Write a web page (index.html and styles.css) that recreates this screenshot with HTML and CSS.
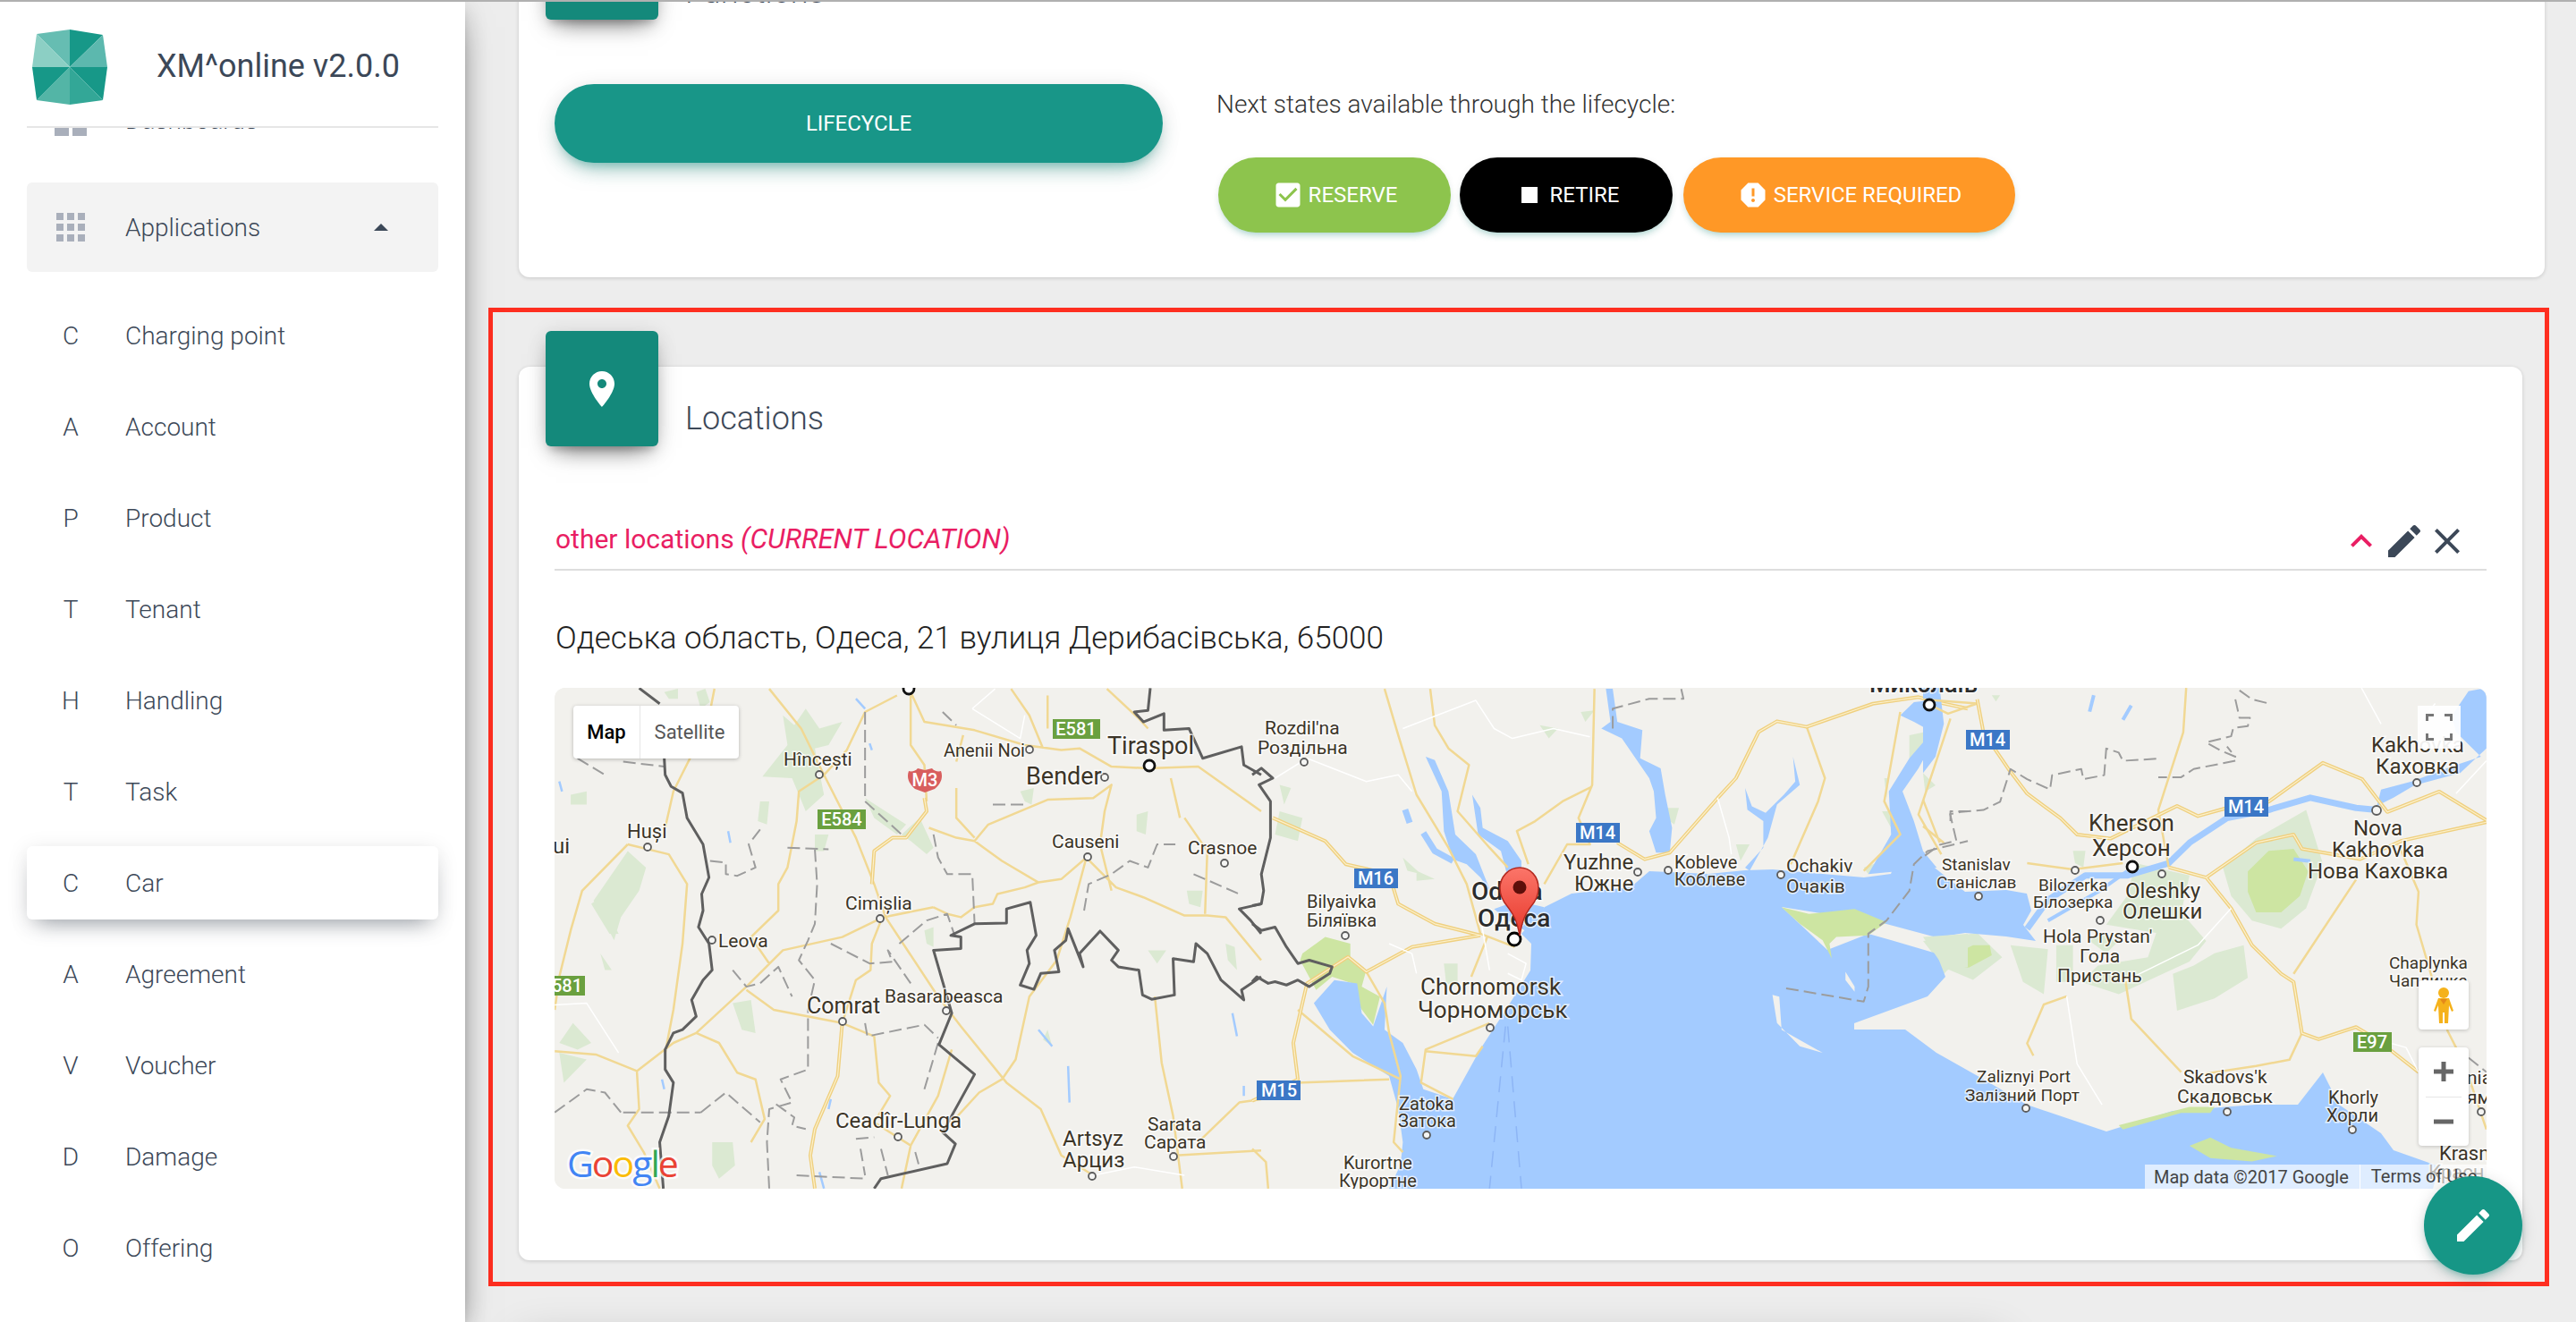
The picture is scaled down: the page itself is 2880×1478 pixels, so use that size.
FILE: index.html
```
<!DOCTYPE html>
<html lang="en">
<head>
<meta charset="utf-8">
<title>XM^online</title>
<link rel="stylesheet" href="styles.css">
</head>
<body>
<div class="topline"></div>
<div class="app">
  <aside class="sidebar">
    <header class="brand">
      <svg class="logo" viewBox="36 33 84 84">
        <path fill="#66bdb2" d="M78 75 41 38 78 33z"/>
        <path fill="#179888" d="M78 75V33l37 6z"/>
        <path fill="#5cb8ae" d="M78 75l37-36 5 36z"/>
        <path fill="#179888" d="M78 75h42l-5 37z"/>
        <path fill="#33a797" d="M78 75l37 37-37 5z"/>
        <path fill="#53b5a6" d="M78 75v42l-37-5z"/>
        <path fill="#179888" d="M78 75 41 112l-5-37z"/>
        <path fill="#8ccfc4" d="M78 75H36l5-37z"/>
      </svg>
      <span class="brand-title">XM^online v2.0.0</span>
    </header>
    <nav class="nav">
      <div class="nav-list">
        <a class="nav-item nav-dash"><span class="nav-mark"><span class="squares-2"><i></i><i></i><i></i><i></i></span></span><span>Dashboards</span></a>
        <a class="nav-item nav-apps"><span class="nav-mark"><span class="squares-3"><i></i><i></i><i></i><i></i><i></i><i></i><i></i><i></i><i></i></span></span><span>Applications</span><b class="caret"></b></a>
        <a class="nav-item"><span class="nav-mark">C</span><span>Charging point</span></a>
        <a class="nav-item"><span class="nav-mark">A</span><span>Account</span></a>
        <a class="nav-item"><span class="nav-mark">P</span><span>Product</span></a>
        <a class="nav-item"><span class="nav-mark">T</span><span>Tenant</span></a>
        <a class="nav-item"><span class="nav-mark">H</span><span>Handling</span></a>
        <a class="nav-item"><span class="nav-mark">T</span><span>Task</span></a>
        <a class="nav-item nav-active"><span class="nav-mark">C</span><span>Car</span></a>
        <a class="nav-item"><span class="nav-mark">A</span><span>Agreement</span></a>
        <a class="nav-item"><span class="nav-mark">V</span><span>Voucher</span></a>
        <a class="nav-item"><span class="nav-mark">D</span><span>Damage</span></a>
        <a class="nav-item"><span class="nav-mark">O</span><span>Offering</span></a>
      </div>
    </nav>
  </aside>
  <main class="main">
    <section class="card card-functions">
      <div class="card-head">
        <div class="card-icon"></div>
        <h2 class="card-title">Functions</h2>
      </div>
      <div class="life-row">
        <button class="btn-life">LIFECYCLE</button>
        <div class="states">
          <p class="states-text">Next states available through the lifecycle:</p>
          <div class="states-row">
            <button class="btn-state st-reserve"><svg viewBox="0 0 24 24"><path d="M19 3H5c-1.11 0-2 .9-2 2v14c0 1.1.89 2 2 2h14c1.11 0 2-.9 2-2V5c0-1.1-.89-2-2-2zm-9 14l-5-5 1.41-1.41L10 14.17l7.59-7.59L19 8l-9 9z"/></svg>RESERVE</button>
            <button class="btn-state st-retire"><svg viewBox="0 0 24 24"><path d="M6 6h12v12H6z"/></svg>RETIRE</button>
            <button class="btn-state st-service"><svg viewBox="0 0 24 24"><path d="M15.73 3H8.27L3 8.27v7.46L8.27 21h7.46L21 15.73V8.27L15.73 3zM12 17.3c-.72 0-1.3-.58-1.3-1.3 0-.72.58-1.3 1.3-1.3.72 0 1.3.58 1.3 1.3 0 .72-.58 1.3-1.3 1.3zm1-4.3h-2V7h2v6z"/></svg>SERVICE REQUIRED</button>
          </div>
        </div>
      </div>
    </section>

    <div class="frame">
      <section class="card card-locations">
        <div class="card-head">
          <div class="card-icon"><svg viewBox="0 0 24 24"><path d="M12 2C8.13 2 5 5.13 5 9c0 5.25 7 13 7 13s7-7.75 7-13c0-3.87-3.13-7-7-7zm0 9.5c-1.38 0-2.5-1.12-2.5-2.5s1.12-2.5 2.5-2.5 2.5 1.12 2.5 2.5-1.12 2.5-2.5 2.5z"/></svg></div>
          <h2 class="card-title">Locations</h2>
        </div>
        <div class="loc-head">
          <span class="loc-name">other locations <em>(CURRENT LOCATION)</em></span>
          <span class="loc-tools">
            <svg class="tool tool-pink" viewBox="0 0 24 24"><path d="M12 8l-6 6 1.41 1.41L12 10.83l4.59 4.58L18 14z"/></svg>
            <svg class="tool" viewBox="0 0 24 24"><path d="M3 17.25V21h3.75L17.81 9.94l-3.75-3.75L3 17.25zM20.71 7.04c.39-.39.39-1.02 0-1.41l-2.34-2.34c-.39-.39-1.02-.39-1.41 0l-1.83 1.83 3.75 3.75 1.83-1.83z"/></svg>
            <svg class="tool" viewBox="0 0 24 24"><path d="M19 6.41L17.59 5 12 10.59 6.41 5 5 6.41 10.59 12 5 17.59 6.41 19 12 13.41 17.59 19 19 17.59 13.41 12z"/></svg>
          </span>
        </div>
        <p class="address">Одеська область, Одеса, 21 вулиця Дерибасівська, 65000</p>
        <div class="map">
          <svg class="map-art" viewBox="0 0 2160 560">
            <defs>
              <linearGradient id="pinfill" x1="0" y1="0" x2="0" y2="1">
                <stop offset="0" stop-color="#fb7569"/>
                <stop offset="1" stop-color="#e8392c"/>
              </linearGradient>
            </defs>
            <rect class="land" width="2160" height="560"/>

            <!-- region west -->
            <g transform="translate(-10,-10) scale(.5102,.37)">
              <path class="gl" d="M520 110 545 140 570 90 600 150 650 130 620 200 590 210 610 350 570 400 540 300 475 295 530 200zM780 470 820 420 850 510 835 530 800 490zM700 360 790 440 770 470 720 420zM180 520 220 570 205 640 165 720 150 790 105 670 130 620zM60 1040 100 1100 70 1120 30 1100zM410 980 450 970 460 1070 430 1060zM365 1400 410 1400 415 1470 380 1510 365 1470zM30 1130 90 1150 40 1220zM470 370 490 370 485 440 465 430zM330 40 350 30 360 70 340 90zM260 40 290 30 290 60 270 60zM1040 340 1070 330 1065 380 1050 370zM1295 410 1320 400 1315 470 1295 460zM1405 640 1440 640 1435 690 1410 680zM830 760 850 750 850 810 835 800zM1320 820 1360 820 1340 860zM1490 800 1510 810 1515 880 1495 850zM120 830 145 880 130 880zM55 350 90 340 90 380 55 380zM120 660 160 770 140 770 100 680zM590 470 620 470 610 520 590 520zM1090 1090 1110 1110 1100 1060z"/>
              <path class="water-s" d="M400 460 405 495M710 195 715 215M30 310 36 340M680 60 700 90M1505 1010 1515 1080M1080 1060 1110 1110M1145 1170 1148 1280M1530 1230 1530 1260M255 1210 260 1240M625 1270 620 1300M600 1490 610 1540"/>
              <path class="road" d="M610 290 680 480 720 620 745 720 860 960 910 1050 1010 1220 1085 1300 1130 1440 1200 1500M800 40 830 130 940 155 1050 200 1130 215 1170 210 1240 265 1320 270 1430 265 1568 400M770 50 700 100 660 215 610 290 555 340 550 430 530 570 510 620 510 700 450 780 490 860M180 500 80 640 55 760 30 900 20 1000M180 500 270 530 310 620 300 800 280 1000 262 1130M330 1070 380 1100 420 1190 460 1210 480 1330 450 1400M740 720 650 780 520 820 440 930 330 1070 280 1100 200 1185 110 1135 20 1125M440 940 500 1000 650 1040 720 1080 730 1220 755 1260 720 1340 800 1410 780 1540M735 730 715 800 712 880 680 910 650 1040M850 690 740 720M850 690 880 710 910 720 940 690 980 680 990 650 1050 630 1080 615 1130 605 1185 540 1150 720 1120 850 1060 960 1030 1150 1000 1210 950 1250 890 1340M1185 540 1250 630 1310 660 1400 715 1450 715 1490 720 1568 850M940 490 970 440 1100 365 1200 360 1240 320 1225 400 1215 500M800 50 800 200 830 260 835 370M940 490 960 510 1000 550 1080 615M840 450 900 480 940 490M900 250 915 170M900 330 900 420 940 480M1335 960 1350 1160 1375 1320 1395 1540M1380 1440 1568 1425M1430 1400 1520 1280 1568 1270M1020 30 1060 110 1090 210M1230 30 1300 120 1320 150M1100 50 1100 150M1400 420 1450 520 1445 710M1370 300 1390 420M200 1185 205 1300 180 1350 215 1430 250 1540M370 30 360 100 320 230 280 340 262 450M490 30 560 150 610 290M800 1410 860 1260 890 1120M1215 500 1240 640"/>
              <path class="road road-wide" d="M650 1040 640 1200 590 1360 580 1440 590 1540M830 360 835 400 790 480 760 480 720 520 715 620"/>
              <path class="road-core" d="M650 1040 640 1200 590 1360 580 1440 590 1540M830 360 835 400 790 480 760 480 720 520 715 620"/>
              <path class="minor" d="M20 985 90 980 160 1130M1400 1500 1290 1475 1200 1500M935 90 985 30M935 90 1040 180 1050 110"/>
              <path class="dash" d="M470 455 445 500 460 570 420 595 395 590 395 555 360 550M530 510 620 515M590 515 595 620 590 740 575 790 555 850 590 910 575 1000 575 1180 515 1210 540 1280 490 1300 485 1400 490 1540M625 800 710 860 760 855 750 820 800 920M775 800 835 730 880 710 895 770M700 1040 705 1080 830 1045 860 1085M860 1100 830 1240M170 1310 340 1310M20 1310 90 1240 130 1250 165 1310M340 1310 395 1250 470 1340M505 1285 545 1325 540 1350 570 1360M680 1390 720 1385M690 1420 700 1500M735 1420 750 1500M810 1430 820 1480M550 1500 700 1510M700 100 700 370 780 470M850 470 860 540 880 590 935 590 940 740M1180 700 1190 620 1240 590 1280 550 1320 570 1340 500 1380 500M70 240 130 290M170 250 260 265M870 100 900 140M980 380 1050 380M1420 590 1520 650M410 880 440 930 470 920 510 870 540 960"/>
              <path class="border" d="M205 28 250 75M260 240 262 290 275 325 300 345 310 420 345 500 358 600 342 650 345 700 335 750 358 800 365 880 345 910 320 970 330 1020 300 1060 280 1070 262 1120 262 1180 280 1220 270 1320 250 1400 258 1540M720 1540 735 1510 880 1465 898 1405 870 1370 940 1195 862 1105 890 1010 850 820 910 815 910 780 888 775 940 740 1010 738 1010 695 1062 675 1075 775 1055 820 1060 860 1040 925 1070 938 1085 890 1125 885 1115 820 1140 790 1145 755 1178 870 1170 830 1215 762 1255 820 1240 850 1255 870 1300 880 1308 955 1328 968 1378 955 1375 845 1420 855 1425 800 1450 830 1480 910 1530 970 1525 940 1568 900M1325 28 1320 95 1290 100 1310 130 1355 105 1355 155 1410 150 1440 240 1525 205 1530 260 1568 290M1568 680 1520 695 1545 730 1568 770"/>
            </g>

            <!-- region centre: land features -->
            <g transform="translate(780,-10) scale(.5102,.37)">
              <path class="gl" d="M60 400 110 420 100 490 50 470zM330 540 370 590 340 580zM360 580 400 605 360 610zM630 140 670 150 650 180zM720 100 750 95 730 130zM910 390 935 390 925 440 905 420zM420 860 450 860 450 930 425 920zM1060 500 1090 500 1070 550zM1440 170 1475 160 1470 220 1440 240zM1385 300 1395 300 1390 360zM1380 400 1405 400 1400 450zM1340 570 1380 550 1350 590zM1485 790 1540 790 1530 870 1510 900zM60 320 85 330 70 380z"/>
              <path class="gs" d="M110 830 160 780 215 800 215 840 250 880 240 930 280 960 265 1045 235 990 220 920 175 900 140 940 105 850z"/>
            </g>

            <!-- east green -->
            <g transform="translate(1530,-10) scale(.4655,.4579)">
              <path class="gl" d="M0 640 130 620 190 680 120 735 50 705zM210 650 300 660 290 770 240 740zM320 650 360 650 360 740 320 740zM380 740 470 770 640 690 680 640 620 570 640 480 510 450 490 530 440 600 560 620 540 680 420 700zM600 720 650 700 700 670 770 650 780 730 700 780 610 810zM720 460 800 390 920 320 960 450 920 560 860 610 790 590 740 530zM400 640 430 620 470 640 440 670zM0 230 30 260 5 275zM165 40 185 40 175 55zM360 420 390 420 385 460 365 450z"/>
              <path class="gs" d="M780 470 830 420 890 415 925 470 905 530 860 570 800 570 780 520zM80 670 120 650 160 650 165 675 110 705 75 700z"/>
            </g>

            <!-- water -->
            <path class="water" d="M933 560 956 512 1004 460 1035 404 1066 356 1091 316 1092 286 1081 275 1107 245 1137 230 1203 223 1224 205 1290 208 1331 204 1362 203 1418 208 1464 212 1494 208 1510 168 1530 191 1577 228 1623 226 1646 230 1651 249 1642 265 1656 283 1623 278 1577 274 1545 279 1489 264 1372 245 1423 293 1469 275 1494 282 1545 297 1555 323 1535 345 1494 360 1453 375 1453 382 1510 382 1545 408 1600 439 1646 466 1735 496 1809 473 1902 466 1949 466 1977 430 1995 466 2042 498 2056 517 2107 535 2100 560z"/>
            <g transform="translate(780,-10) scale(.5102,.37)">
              <path class="water" d="M135 980 180 910 230 920 240 1010 265 1050 295 930 290 1060 330 1100 360 1180 375 1240 440 1270 345 1420 320 1540 330 1400 320 1300 300 1200 220 1130 170 1060zM530 695 580 670 640 690 610 770 560 730zM380 235 400 245 430 340 445 470 490 530 510 600 525 650 500 600 470 560 440 545 420 460 415 340zM482 350 500 390 505 450 560 490 590 550 590 600 560 600 545 520 495 470zM775 30 790 30 800 130 855 155 850 240 895 270 905 350 920 450 915 525 885 525 870 460 885 420 880 340 870 300 840 240 810 180 765 150 785 130zM1185 235 1200 320 1150 380 1130 480 1090 580 1080 570 1120 510 1120 430 1085 395 1080 330 1095 385 1125 405 1165 350 1190 310zM1420 110 1450 70 1485 65 1510 110 1500 170 1460 270 1425 340 1450 430 1470 520 1500 570 1350 590 1400 470 1395 340 1440 240 1490 160 1450 130z"/>
              <path class="riv w7" d="M375 465 400 520 440 550M335 395 345 435"/>
              <path class="gs" d="M1160 690 1220 710 1320 695 1390 735 1350 775 1280 780 1265 800 1270 845 1250 790 1200 740z"/>
              <path class="land" d="M1140 955 1155 960 1160 1060 1250 1130 1200 1110 1150 1040zM1300 885 1320 930 1320 945 1300 910z"/>
              <path class="gl" d="M1470 780 1568 770 1568 870 1520 880z"/>
              <path class="road" d="M290 30 320 170 360 350 430 510 470 620 500 770 575 810M390 30 400 140 430 210 475 260 450 400 520 510 560 570M750 30 745 320 715 420 740 500 690 500 640 620M745 325 680 370 620 430 580 460 605 560M1215 145 1255 300 1240 370 1180 560M1420 100 1385 370 1420 470 1340 580M1530 120 1460 410 1510 530M250 885 290 980 300 1070 325 1200 310 1400 330 1430M100 1000 220 1140 325 1210M520 1040 380 1120 370 1220 440 1270M380 1125 490 1140 505 1110M480 900 515 780M100 1220 300 1210M0 1420 30 1460 35 1540"/>
              <path class="road road-wide" d="M800 495 860 545 915 525 1020 360 1060 300 1110 160 1150 128 1215 145 1360 75 1460 55 1500 70 1568 90M45 420 160 490 205 560 300 590 320 680 400 740 500 775M500 775 350 810 250 885 210 840 120 920 90 1100 100 1210 0 1275"/>
              <path class="road-core" d="M800 495 860 545 915 525 1020 360 1060 300 1110 160 1150 128 1215 145 1360 75 1460 55 1500 70 1568 90M45 420 160 490 205 560 300 590 320 680 400 740 500 775M500 775 350 810 250 885 210 840 120 920 90 1100 100 1210 0 1275"/>
              <path class="minor" d="M500 720 520 880M560 830 600 860 590 910 560 890M330 150 490 65 530 150 570 180 660 150 740 175M50 300 120 240 250 310 320 290 350 340M1020 360 1045 480 1050 530M300 800 350 830 360 890"/>
              <path class="dash" d="M790 150 790 90 870 60 945 60 940 30M1170 935 1340 975 1350 930 1350 770 1390 730 1440 640 1450 560 1480 520 1568 490M1530 430 1530 400 1568 400"/>
              <path class="lane" d="M555 1050 520 1540M560 1050 590 1540"/>
              <path class="border" d="M0 290 20 270 45 300 15 320 40 370 40 480 20 590 25 640 20 680 0 685M0 740 20 760 50 750 75 810 100 860 125 850 175 870 170 890 125 930 100 910 75 925 50 915 35 920 10 900 0 915"/>
            </g>

            <!-- east rivers and roads -->
            <g transform="translate(1530,-10) scale(.4655,.4579)">
              <path class="water" d="M1353 22 1310 30 1270 90 1280 130 1340 190 1280 210 1175 250 1100 270 1090 310 1130 290 1180 260 1290 230 1353 170zM0 22 40 22 50 110 30 190 0 230z"/>
              <path class="riv w7" d="M1090 320 1040 315 930 290 830 320 730 340 640 400 590 450 490 480 390 480 300 540 250 610"/>
              <path class="riv w4" d="M890 440 930 445M490 470 420 520 300 590M500 65 480 100M410 40 400 80"/>
              <path class="road" d="M632 22 625 130 565 320 590 460M910 865 880 930 800 945 670 965M890 720 1040 490M1140 400 1190 520 1185 600 1260 860 1300 940M485 730 500 830 620 960M250 450 360 465 480 450M345 775 290 795 250 890 265 920M130 60 60 85 30 70M0 50 130 60M0 295 40 400M0 360 50 400M1300 940 1353 1100"/>
              <path class="road road-wide" d="M130 50 145 130 205 220 250 280 330 340 370 380 450 390 570 330 610 310 660 335 730 315 830 300 960 205 1055 245 1115 325 1240 275 1353 345M590 460 680 485 740 560 790 650 860 720 890 740 910 865 950 880 1040 850 1090 880 1190 960M680 485 800 400 890 380 910 415 1050 440 1150 395 1353 350"/>
              <path class="road-core" d="M130 50 145 130 205 220 250 280 330 340 370 380 450 390 570 330 610 310 660 335 730 315 830 300 960 205 1055 245 1115 325 1240 275 1353 345M590 460 680 485 740 560 790 650 860 720 890 740 910 865 950 880 1040 850 1090 880 1190 960M680 485 800 400 890 380 910 415 1050 440 1150 395 1353 350"/>
              <path class="minor" d="M345 775 370 940 430 1040M480 740 660 650 740 560M1053 22 1100 110M1230 60 1190 110M1353 200 1280 280M1090 880 1160 900 1190 960"/>
              <path class="dash" d="M760 28 790 50 830 60M750 50 760 95 785 95 780 115 745 120 740 140 680 155 715 175 750 190 730 165M750 200 650 220 620 240 565 240M560 195 480 200 470 180 440 170 435 235 385 245 380 220 310 235 305 270 250 245 210 220 185 300 145 320 90 325 65 330 80 395 40 405 0 435M1310 925 1353 960"/>
              <path class="gs" d="M640 1140 690 1120 740 1145 850 1165 790 1178 690 1170zM470 1090 640 1045 700 1045 690 1060 620 1060 480 1100z"/>
            </g>

            <!-- towns -->
            <g class="towns">
              <circle cx="296" cy="97" r="4"/><circle cx="104" cy="178" r="4"/><circle cx="531" cy="69" r="4"/><circle cx="615" cy="100" r="4"/><circle cx="596" cy="189" r="4"/><circle cx="749" cy="196" r="4"/><circle cx="364" cy="258" r="4"/><circle cx="176" cy="282" r="4"/><circle cx="438" cy="361" r="4"/><circle cx="322" cy="373" r="4"/><circle cx="384" cy="502" r="4"/><circle cx="601" cy="546" r="4"/><circle cx="692" cy="524" r="4"/><circle cx="838" cy="83" r="4"/><circle cx="884" cy="277" r="4"/><circle cx="1211" cy="206" r="4"/><circle cx="1245" cy="204" r="4"/><circle cx="1371" cy="209" r="4"/><circle cx="1046" cy="380" r="4"/><circle cx="975" cy="500" r="4"/><circle cx="1700" cy="204" r="4"/><circle cx="1797" cy="208" r="4"/><circle cx="1592" cy="233" r="4"/><circle cx="1728" cy="260" r="4"/><circle cx="2082" cy="106" r="4"/><circle cx="2037" cy="137" r="5"/><circle cx="1645" cy="470" r="4"/><circle cx="1870" cy="474" r="4"/><circle cx="2010" cy="494" r="4"/><circle cx="2154" cy="474" r="4"/>
            </g>
            <g class="cities">
              <circle cx="665" cy="87" r="6"/><circle cx="396" cy="1" r="6"/><circle cx="1537" cy="19" r="6"/><circle cx="1764" cy="200" r="6"/>
            </g>

            <!-- labels -->
            <g class="labels">
              <text x="256" y="87" font-size="21">Hîncești</text>
              <text x="81" y="168" font-size="22">Huși</text>
              <text x="-2" y="185" font-size="24">ui</text>
              <text x="435" y="77" font-size="20">Anenii Noi</text>
              <text x="618" y="74" font-size="27">Tiraspol</text>
              <text x="527" y="108" font-size="27">Bender</text>
              <text x="556" y="179" font-size="21">Causeni</text>
              <text x="708" y="186" font-size="21">Crasnoe</text>
              <text x="325" y="248" font-size="21">Cimișlia</text>
              <text x="183" y="290" font-size="21">Leova</text>
              <text x="282" y="364" font-size="25">Comrat</text>
              <text x="369" y="352" font-size="21">Basarabeasca</text>
              <text x="314" y="492" font-size="24">Ceadîr-Lunga</text>
              <text x="568" y="512" font-size="24">Artsyz</text>
              <text x="568" y="536" font-size="24">Арциз</text>
              <text x="663" y="495" font-size="21">Sarata</text>
              <text x="659" y="515" font-size="21">Сарата</text>
              <text x="794" y="52" font-size="21">Rozdil'na</text>
              <text x="786" y="74" font-size="21">Роздільна</text>
              <text x="841" y="246" font-size="20">Bilyaivka</text>
              <text x="841" y="267" font-size="20">Біляївка</text>
              <text class="big" x="1025" y="237" font-size="28">Odesa</text>
              <text class="big" x="1032" y="267" font-size="28">Одеса</text>
              <text x="1128" y="203" font-size="24">Yuzhne</text>
              <text x="1140" y="227" font-size="24">Южне</text>
              <text x="1252" y="202" font-size="20">Kobleve</text>
              <text x="1252" y="221" font-size="20">Коблеве</text>
              <text x="1377" y="206" font-size="21">Ochakiv</text>
              <text x="1377" y="229" font-size="21">Очаків</text>
              <text x="968" y="343" font-size="26">Chornomorsk</text>
              <text x="965" y="369" font-size="26">Чорноморськ</text>
              <text x="944" y="472" font-size="20">Zatoka</text>
              <text x="943" y="491" font-size="20">Затока</text>
              <text x="882" y="538" font-size="20">Kurortne</text>
              <text x="877" y="558" font-size="20">Курортне</text>
              <text class="big" x="1470" y="5" font-size="27">Миколаїв</text>
              <text x="1551" y="204" font-size="19">Stanislav</text>
              <text x="1545" y="224" font-size="19">Станіслав</text>
              <text x="1715" y="160" font-size="26">Kherson</text>
              <text x="1719" y="188" font-size="26">Херсон</text>
              <text x="1659" y="227" font-size="19">Bilozerka</text>
              <text x="1653" y="246" font-size="19">Білозерка</text>
              <text x="1756" y="235" font-size="24">Oleshky</text>
              <text x="1753" y="258" font-size="24">Олешки</text>
              <text x="1664" y="285" font-size="21">Hola Prystan'</text>
              <text x="1705" y="307" font-size="21">Гола</text>
              <text x="1680" y="329" font-size="21">Пристань</text>
              <text x="2031" y="72" font-size="24">Kakhovka</text>
              <text x="2036" y="96" font-size="24">Каховка</text>
              <text x="2011" y="165" font-size="24">Nova</text>
              <text x="1987" y="189" font-size="24">Kakhovka</text>
              <text x="1960" y="213" font-size="24">Нова Каховка</text>
              <text x="2051" y="314" font-size="19">Chaplynka</text>
              <text x="2051" y="334" font-size="19">Чаплинка</text>
              <text x="1590" y="441" font-size="19">Zaliznyi Port</text>
              <text x="1577" y="462" font-size="19">Залізний Порт</text>
              <text x="1821" y="442" font-size="21">Skadovs'k</text>
              <text x="1814" y="464" font-size="21">Скадовськ</text>
              <text x="1983" y="465" font-size="20">Khorly</text>
              <text x="1981" y="485" font-size="20">Хорли</text>
              <text x="2107" y="528" font-size="22">Krasn</text>
              <text x="2095" y="549" font-size="22">Красн</text>
              <text x="2138" y="443" font-size="21">nia</text>
              <text x="2138" y="465" font-size="21">ям</text>
            </g>

            <!-- route badges -->
            <g class="green-badges">
              <rect x="557" y="35" width="53" height="22"/><rect x="294" y="136" width="54" height="22"/><rect x="0" y="322" width="34" height="22"/><rect x="2011" y="385" width="43" height="22"/>
            </g>
            <g class="blue-badges">
              <rect x="1142" y="151" width="49" height="22"/><rect x="894" y="202" width="49" height="22"/><rect x="785" y="439" width="49" height="22"/><rect x="1578" y="47" width="49" height="22"/><rect x="1867" y="122" width="49" height="22"/>
            </g>
            <path class="m3" d="M396 93c3 1 8 0 10-3l8 2 8-2c2 3 7 4 10 3 3 8-1 15-7 20l-11 4-11-4c-6-5-10-12-7-20z"/>
            <g class="badge-text" text-anchor="middle">
              <text x="583" y="53">E581</text><text x="321" y="154">E584</text><text x="14" y="340">581</text><text x="2032" y="403">E97</text>
              <text x="1166" y="169">M14</text><text x="918" y="220">M16</text><text x="810" y="457">M15</text><text x="1602" y="65">M14</text><text x="1891" y="140">M14</text><text x="414" y="110">M3</text>
            </g>

            <!-- google wordmark -->
            <text class="google" x="14" y="547"><tspan fill="#4285f4">G</tspan><tspan fill="#ea4335">o</tspan><tspan fill="#fbbc05">o</tspan><tspan fill="#4285f4">g</tspan><tspan fill="#34a853">l</tspan><tspan fill="#ea4335">e</tspan></text>

            <!-- marker -->
            <circle class="city-odesa" cx="1073" cy="281" r="7"/>
            <path class="pin" d="M1079 277c-3-17-7-24-14-33-5-6-8-12-8-20 0-13 10-23 22-23s21 10 21 23c0 8-3 14-8 20-7 9-10 16-13 33z"/>
            <circle class="pin-dot" cx="1079" cy="223" r="7.5"/>
          </svg>

          <div class="map-type"><span class="type-map">Map</span><span class="type-sat">Satellite</span></div>
          <div class="map-full">
            <svg viewBox="0 0 32 32"><path d="M1 9V1h9v3H4v5zM22 1h9v8h-3V4h-6zM1 23h3v5h6v3H1zM28 23h3v8h-9v-3h6z"/></svg>
          </div>
          <div class="map-peg">
            <svg viewBox="0 0 24 40"><circle cx="12" cy="6" r="6" fill="#f5b21b"/><path fill="#f5b21b" d="M6 12h12l5 14-2 1-3-7-1 20h-4V28h-2v12H7L6 20l-3 7-2-1z"/><path fill="#e58a1a" d="M8 13h8l-4 6z"/></svg>
          </div>
          <div class="map-zoom">
            <span class="zoom-btn"><svg viewBox="0 0 22 22"><path d="M8.500 0h5v8.500H22v5h-8.500V22h-5v-8.500H0v-5h8.500z"/></svg></span>
            <span class="zoom-sep"></span>
            <span class="zoom-btn"><svg viewBox="0 0 22 22"><path d="M0 8.500h22v5H0z"/></svg></span>
          </div>
          <div class="map-credit"><span>Map data ©2017 Google</span><span class="credit-terms">Terms of Use</span></div>
        </div>
      </section>
    </div>
    <div class="next-card"></div>
    <button class="fab"><svg viewBox="0 0 24 24"><path d="M3 17.25V21h3.75L17.81 9.94l-3.75-3.75L3 17.25zM20.71 7.04c.39-.39.39-1.02 0-1.41l-2.34-2.34c-.39-.39-1.02-.39-1.41 0l-1.83 1.83 3.75 3.75 1.83-1.83z"/></svg></button>
  </main>
</div>
</body>
</html>
```
FILE: styles.css
```
* { box-sizing: border-box; }
html, body { margin: 0; height: 100%; overflow: hidden; }
body {
  display: flex;
  flex-direction: column;
  background: #ededed;
  font-family: Roboto, "Noto Sans", sans-serif;
  color: #3c4858;
}
.topline { height: 2px; flex: none; background: #b0b0b0; position: relative; z-index: 5; }
.app { flex: 1; display: flex; min-height: 0; }

/* sidebar */
.sidebar {
  width: 520px;
  flex: none;
  display: flex;
  flex-direction: column;
  background: #fff;
  position: relative;
  z-index: 3;
  box-shadow: 0 16px 38px -12px rgba(0,0,0,.56), 0 4px 25px 0 rgba(0,0,0,.12), 0 8px 10px -5px rgba(0,0,0,.2);
}
.brand {
  flex: none;
  height: 141px;
  margin: 0 30px;
  padding: 31px 0 0 6px;
  display: flex;
  align-items: flex-start;
  border-bottom: 2px solid #e6e6e6;
}
.logo { width: 84px; height: 84px; flex: none; }
.brand-title { margin: 20px 0 0 55px; font-size: 36px; line-height: 42px; font-weight: 400; white-space: nowrap; }
.nav { flex: 1; overflow: hidden; padding: 0 30px; position: relative; }
.nav-list { margin-top: -50px; display: flex; flex-direction: column; }
.nav-item {
  height: 82px;
  margin-bottom: 20px;
  flex: none;
  display: flex;
  align-items: center;
  border-radius: 6px;
  font-size: 28px;
  font-weight: 300;
  color: #3c4858;
}
.nav-mark { width: 98px; margin-right: 12px; flex: none; display: flex; justify-content: center; }
.nav-dash { margin-bottom: 29px; }
.nav-apps { height: 100px; margin-bottom: 30px; background: #f3f3f3; position: relative; }
.nav-active { background: #fff; box-shadow: 0 14px 24px -12px rgba(60,72,88,.5), 0 4px 24px 0 rgba(0,0,0,.1); }
.squares-2 { display: grid; grid-template-columns: 16px 16px; gap: 4px; }
.squares-2 i { height: 16px; background: #a9afbb; }
.squares-3 { display: grid; grid-template-columns: repeat(3, 8px); gap: 4px; }
.squares-3 i { height: 8px; background: #a9afbb; }
.caret {
  margin-left: auto;
  margin-right: 56px;
  width: 0;
  height: 0;
  border-left: 8px solid transparent;
  border-right: 8px solid transparent;
  border-bottom: 8px solid #3c4858;
}

/* main */
.main { flex: 1; min-width: 0; position: relative; padding: 0 30px 0 26px; overflow: hidden; }
.card {
  background: #fff;
  border-radius: 12px;
  padding: 0 40px;
  box-shadow: 0 1px 4px 0 rgba(0,0,0,.16);
}
.card-functions { margin: -69px 0 34px 34px; height: 377px; margin-right: 5px; padding-bottom: 50px; }
.card-locations { padding-bottom: 80px; }
.frame { border: 5px solid #fe2e20; padding: 61px 25px 24px 29px; }
.card-head { display: flex; align-items: flex-start; height: 89px; }
.card-icon {
  width: 126px;
  height: 129px;
  margin: -40px 0 0 -10px;
  flex: none;
  display: flex;
  align-items: center;
  justify-content: center;
  background: #14897b;
  border-radius: 6px;
  box-shadow: 0 14px 26px -12px rgba(0,0,0,.55), 0 4px 23px 0 rgba(0,0,0,.12), 0 8px 10px -5px rgba(0,0,0,.2);
}
.card-icon svg { width: 48px; height: 48px; fill: #fff; }
.card-title { margin: 37px 0 0 30px; font-size: 36px; line-height: 42px; font-weight: 300; color: #3c4858; }

.life-row { display: flex; gap: 60px; margin-top: 72px; }
.btn-life {
  width: 680px;
  height: 88px;
  border: 0;
  border-radius: 44px;
  background: #189688;
  color: #fff;
  font: 400 24px Roboto, sans-serif;
  box-shadow: 0 14px 26px -12px rgba(24,150,136,.5), 0 4px 23px 0 rgba(0,0,0,.12), 0 8px 10px -5px rgba(24,150,136,.25);
}
.states { display: flex; flex-direction: column; }
.states-text { margin: 2px 0 -2px; font-size: 28px; line-height: 42px; font-weight: 300; color: #333; white-space: nowrap; }
.states-row { display: flex; gap: 10px; margin-top: 40px; margin-left: 2px; }
.btn-state {
  height: 84px;
  border: 0;
  border-radius: 42px;
  display: flex;
  align-items: center;
  justify-content: center;
  gap: 5px;
  color: #fff;
  font: 400 24px Roboto, sans-serif;
  box-shadow: 0 6px 10px -5px rgba(24,150,136,.45), 0 2px 10px 0 rgba(0,0,0,.06);
}
.btn-state svg { width: 36px; height: 36px; fill: #fff; }
.st-reserve { width: 260px; background: #8dc44d; }
.st-retire { width: 238px; margin-right: 2px; background: #000; }
.st-service { width: 371px; background: #ff9826; }

.loc-head { margin-top: 70px; height: 69px; display: flex; align-items: center; justify-content: space-between; border-bottom: 2px solid #ddd; padding-right: 20px; }
.loc-name { font-size: 30px; font-weight: 400; color: #e91e63; margin-left: 1px; }
.loc-name em { font-style: italic; font-size: 31px; }
.loc-tools { display: flex; margin-top: 5px; }
.tool { width: 48px; height: 48px; fill: #3c4858; }
.tool-pink { fill: #e91e63; }
.address { margin: 51px 0 30px 1px; font-size: 35px; line-height: 50px; font-weight: 300; color: #222; white-space: nowrap; }

/* map */
.map { height: 560px; border-radius: 12px; overflow: hidden; position: relative; background: #f2f1ed; }
.map-art { display: block; width: 2160px; height: 560px; }
.land { fill: #f2f1ed; }
.water { fill: #a3cbff; }
.gl { fill: #dbe9d2; }
.gs { fill: #cde5a2; }
.map-art path { vector-effect: non-scaling-stroke; }
.riv, .road, .road-core, .minor, .dash, .border, .lane, .water-s { fill: none; stroke-linejoin: round; }
.riv { stroke: #a3cbff; }
.w4 { stroke-width: 4px; }
.w7 { stroke-width: 7px; }
.water-s { stroke: #a3cbff; stroke-width: 2.500px; }
.road { stroke: #f1d893; stroke-width: 2.500px; }
.road-wide { stroke-width: 4px; stroke: #efd080; }
.road-core { stroke: #fcf1cd; stroke-width: 1.200px; }
.minor { stroke: #fff; stroke-width: 1.500px; }
.dash { stroke: #9c9c9c; stroke-width: 2px; stroke-dasharray: 14 6; }
.lane { stroke: #8db5f5; stroke-width: 1.500px; stroke-dasharray: 18 10; }
.border { stroke: #5f5f5f; stroke-width: 3px; }
.towns circle { fill: #f5f5f3; stroke: #5d5d5d; stroke-width: 1.800px; }
.cities circle { fill: #fff; stroke: #111; stroke-width: 2.800px; }
.labels text {
  font-family: Roboto, "Noto Sans", sans-serif;
  fill: #3b3427;
  stroke: rgba(255,255,255,.7);
  stroke-width: 3px;
  paint-order: stroke;
}
.labels .big { font-weight: 500; fill: #2c2c2c; }
.green-badges rect { fill: #6aa03f; }
.blue-badges rect { fill: #3b77c6; }
.m3 { fill: #d85e5e; }
.badge-text text { font: 500 20px Roboto, sans-serif; fill: #fff; }
.google {
  font: 500 41px "Open Sans", Roboto, sans-serif;
  letter-spacing: -2px;
  stroke: rgba(255,255,255,.75);
  stroke-width: 5px;
  paint-order: stroke;
}
.city-odesa { fill: #fff; stroke: #000; stroke-width: 2.800px; }
.pin { fill: url(#pinfill); stroke: #b3291f; stroke-width: 1.500px; }
.pin-dot { fill: #5d0f0a; }

.map-type {
  position: absolute;
  left: 21px;
  top: 20px;
  width: 185px;
  height: 59px;
  display: flex;
  background: #fff;
  border-radius: 4px;
  font-size: 22px;
  box-shadow: 0 1px 4px rgba(0,0,0,.25);
}
.type-map { width: 75px; display: flex; align-items: center; justify-content: center; font-weight: 500; color: #000; border-right: 1px solid #e6e6e6; }
.type-sat { flex: 1; display: flex; align-items: center; justify-content: center; color: #565656; }
.map-full {
  position: absolute;
  left: 2083px;
  top: 20px;
  width: 48px;
  height: 48px;
  display: flex;
  align-items: center;
  justify-content: center;
  background: rgba(255,255,255,.92);
}
.map-full svg { width: 32px; height: 32px; fill: #777; }
.map-peg, .map-zoom {
  position: absolute;
  left: 2084px;
  width: 56px;
  background: #fff;
  border-radius: 4px;
  box-shadow: 0 1px 4px rgba(0,0,0,.2);
}
.map-peg { top: 327px; height: 55px; display: flex; align-items: center; justify-content: center; }
.map-peg svg { width: 24px; height: 40px; }
.map-zoom { top: 402px; height: 110px; display: flex; flex-direction: column; align-items: center; }
.zoom-btn { flex: 1; display: flex; align-items: center; justify-content: center; }
.zoom-btn svg { width: 22px; height: 22px; fill: #666; }
.zoom-sep { width: 40px; height: 1px; background: #e6e6e6; }
.map-credit {
  position: absolute;
  left: 1778px;
  right: 0;
  bottom: 0;
  height: 27px;
  padding-left: 10px;
  display: flex;
  align-items: center;
  background: rgba(255,255,255,.65);
  font-size: 20px;
  color: #444;
  white-space: nowrap;
  overflow: hidden;
}
.credit-terms { margin-left: 12px; padding-left: 12px; border-left: 1px solid #fff; line-height: 27px; }

/* below the fold */
.next-card { width: 1660px; height: 120px; margin: 60px 0 0 34px; box-shadow: 0 0 50px rgba(0,0,0,.2); background: #e3e3e3; }

.fab {
  position: absolute;
  right: 60px;
  bottom: 53px;
  width: 110px;
  height: 110px;
  padding: 0;
  border: 0;
  border-radius: 50%;
  display: flex;
  align-items: center;
  justify-content: center;
  background: #169686;
  box-shadow: 0 6px 10px -4px rgba(24,150,136,.5), 0 4px 18px rgba(0,0,0,.14);
}
.fab svg { width: 48px; height: 48px; fill: #fff; }
```
